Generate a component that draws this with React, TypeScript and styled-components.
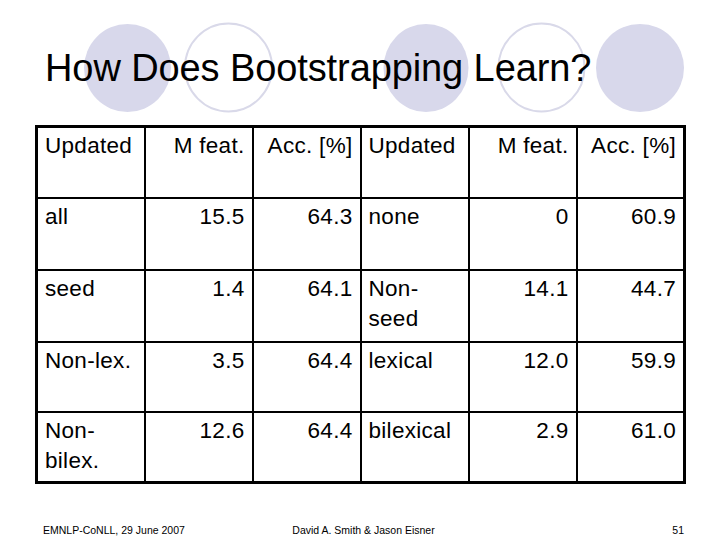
import React from "react";
import styled, { createGlobalStyle } from "styled-components";

const Global = createGlobalStyle`
  html, body { margin: 0; padding: 0; background: #ffffff; }
  body { font-family: "Liberation Sans", Arial, sans-serif; color: #000; }
`;

const Slide = styled.div`
  width: 720px;
  height: 540px;
  display: flex;
  flex-direction: column;
  background: #ffffff;
  overflow: hidden;
`;

const Header = styled.header`
  position: relative;
  height: 125px;
  flex: none;
`;

const Decor = styled.svg`
  position: absolute;
  left: 0;
  top: 0;
  width: 720px;
  height: 125px;
  z-index: 0;
`;

const Title = styled.h1`
  position: relative;
  z-index: 1;
  margin: 0;
  padding: 44px 0 0 45px;
  font-family: "Liberation Sans", Arial, sans-serif;
  font-weight: normal;
  font-size: 38px;
  line-height: 48px;
  letter-spacing: -0.1px;
`;

const Table = styled.table`
  margin-left: 35px;
  border-collapse: collapse;
  table-layout: fixed;
  width: 651px;
  border: 3px solid #000;
`;

const Col = styled.col`
  width: 108px;
`;

const Row = styled.tr<{ $h: number }>`
  height: ${(p) => p.$h}px;
`;

const Cell = styled.td<{ $num?: boolean }>`
  border: 2px solid #000;
  padding: 3px ${(p) => (p.$num ? "7px" : "6px")} 0 7px;
  vertical-align: top;
  text-align: ${(p) => (p.$num ? "right" : "left")};
  font-family: "Liberation Sans", Arial, sans-serif;
  font-size: 22.5px;
  letter-spacing: 0.3px;
  line-height: 30px;
  white-space: pre-line;
`;

const Footer = styled.footer`
  margin-top: auto;
  margin-bottom: 3px;
  display: grid;
  grid-template-columns: 1fr auto 1fr;
  align-items: center;
  padding: 0 36px 0 43px;
  font-family: "Liberation Sans", Arial, sans-serif;
  font-size: 10.5px;
  line-height: 14px;
`;

const FootLeft = styled.span`
  justify-self: start;
`;
const FootMid = styled.span`
  justify-self: center;
`;
const FootRight = styled.span`
  justify-self: end;
`;

const rows: [string, string, string, string, string, string][] = [
  ["Updated", "M feat.", "Acc. [%]", "Updated", "M feat.", "Acc. [%]"],
  ["all", "15.5", "64.3", "none", "0", "60.9"],
  ["seed", "1.4", "64.1", "Non-\nseed", "14.1", "44.7"],
  ["Non-lex.", "3.5", "64.4", "lexical", "12.0", "59.9"],
  ["Non-\nbilex.", "12.6", "64.4", "bilexical", "2.9", "61.0"],
];

const heights = [71, 72, 72, 70, 71];

const fill = "#d8d8eb";
const ring = "#d9d9e9";

export default function App() {
  return (
    <Slide>
      <Global />
      <Header>
        <Decor viewBox="0 0 720 125">
          <ellipse cx="127.5" cy="68" rx="43.5" ry="44" fill={fill} />
          <ellipse cx="228.5" cy="67.5" rx="43.5" ry="44" fill="none" stroke={ring} strokeWidth="2" />
          <ellipse cx="426" cy="68" rx="42.5" ry="44" fill={fill} />
          <ellipse cx="541.5" cy="67.5" rx="43" ry="44" fill="none" stroke={ring} strokeWidth="2" />
          <ellipse cx="640" cy="68" rx="44" ry="44" fill={fill} />
        </Decor>
        <Title>How Does Bootstrapping Learn?</Title>
      </Header>
      <Table>
        <colgroup>
          {rows[0].map((_, i) => (
            <Col key={i} />
          ))}
        </colgroup>
        <tbody>
          {rows.map((r, ri) => (
            <Row key={ri} $h={heights[ri]}>
              {r.map((c, ci) => (
                <Cell key={ci} $num={ci % 3 !== 0}>
                  {c}
                </Cell>
              ))}
            </Row>
          ))}
        </tbody>
      </Table>
      <Footer>
        <FootLeft>EMNLP-CoNLL, 29 June 2007</FootLeft>
        <FootMid>David A. Smith &amp; Jason Eisner</FootMid>
        <FootRight>51</FootRight>
      </Footer>
    </Slide>
  );
}
